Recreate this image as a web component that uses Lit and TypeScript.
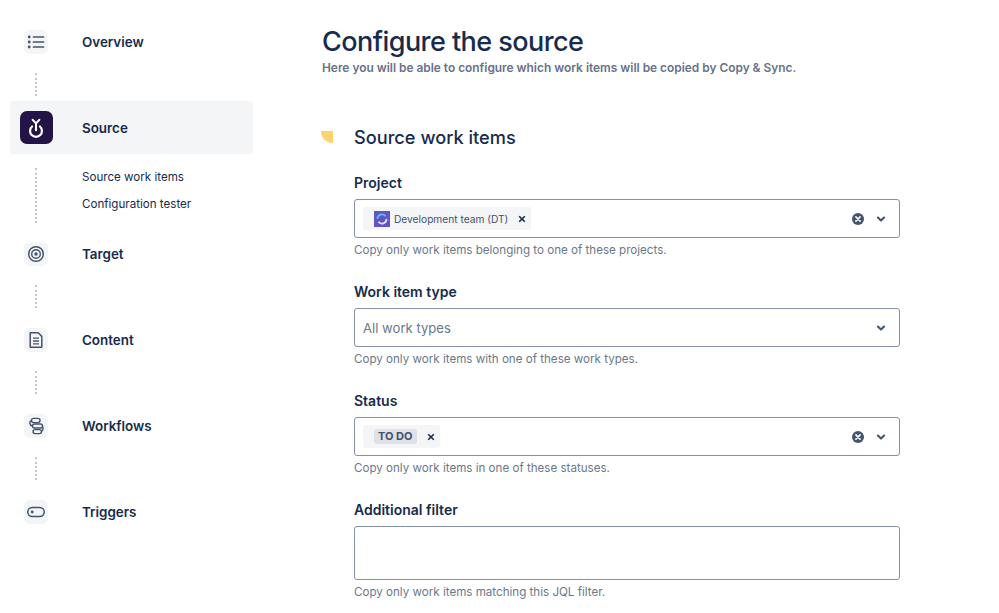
import { LitElement, html, css, svg } from "lit";
import { customElement } from "lit/decorators.js";

const S = "#44546F";
const icons: Record<string, unknown> = {
  list: svg`<circle cx="3.2" cy="5" r="1.4" fill="${S}"/><circle cx="3.2" cy="10" r="1.4" fill="${S}"/><circle cx="3.2" cy="15" r="1.4" fill="${S}"/><path d="M7.5 5H17.5M7.5 10H17.5M7.5 15H17.5" stroke="${S}" stroke-width="1.7" stroke-linecap="round"/>`,
  target: svg`<circle cx="10" cy="10" r="7.3" fill="none" stroke="${S}" stroke-width="1.5"/><circle cx="10" cy="10" r="4.3" fill="none" stroke="${S}" stroke-width="1.4"/><circle cx="10" cy="10" r="1.7" fill="${S}"/>`,
  doc: svg`<path d="M4.2 2.8H12.2L15.8 6.4V17.2H4.2Z" fill="none" stroke="${S}" stroke-width="1.5" stroke-linejoin="round"/><path d="M7 8.2H13M7 11H13M7 13.8H13" stroke="${S}" stroke-width="1.3"/>`,
  flow: svg`<rect x="5.5" y="2.4" width="8.5" height="4.2" rx="2.1" fill="none" stroke="${S}" stroke-width="1.4"/><rect x="6.5" y="8" width="10" height="4" rx="2" fill="none" stroke="${S}" stroke-width="1.4"/><rect x="7" y="13.6" width="8.5" height="4" rx="2" fill="none" stroke="${S}" stroke-width="1.4"/><path d="M5.5 4.5C3 5.6 3.2 9 6.5 10" fill="none" stroke="${S}" stroke-width="1.4"/><path d="M16.5 10.4C17.6 12 17 14.4 15.5 15.4" fill="none" stroke="${S}" stroke-width="1.4"/>`,
  toggle: svg`<rect x="1.8" y="5.6" width="16.4" height="8.8" rx="4.4" fill="none" stroke="${S}" stroke-width="1.5"/><circle cx="6.2" cy="10" r="1.4" fill="${S}"/>`,
};

const chevron = html`<svg class="chev" width="12" height="12" viewBox="0 0 12 12"><path d="M2.9 4.6 6 7.6 9.1 4.6" fill="none" stroke="#44546F" stroke-width="2.1" stroke-linecap="round" stroke-linejoin="round"/></svg>`;
const clear = html`<svg class="clear" width="14" height="14" viewBox="0 0 14 14"><circle cx="7" cy="7" r="6" fill="#44546F"/><path d="M4.9 4.9 9.1 9.1M9.1 4.9 4.9 9.1" stroke="#fff" stroke-width="1.6" stroke-linecap="round"/></svg>`;
const remove = html`<svg class="x" width="8" height="8" viewBox="0 0 8 8"><path d="M1.2 1.2 6.8 6.8M6.8 1.2 1.2 6.8" stroke="#172B4D" stroke-width="1.6"/></svg>`;

@customElement("app-root")
export class AppRoot extends LitElement {
  static styles = css`
    :host { display: flex; width: 999px; height: 613px; overflow: hidden; background: #fff;
      font-family: Inter, "Liberation Sans", sans-serif; color: #172B4D; }
    .side { width: 243px; margin-left: 10px; padding-top: 30px; box-sizing: border-box; flex: none; }
    .item { display: flex; align-items: center; height: 24px; padding-left: 14px; }
    .ico { width: 24px; height: 24px; border-radius: 6px; background: #F4F5F7; display: flex; align-items: center; justify-content: center; flex: none; }
    .label { margin-left: 34px; font-size: 13.4px; font-weight: 600; }
    .dots { width: 0; height: 23px; margin-left: 25px; border-left: 2px dotted #C1C7D0; }
    .gap { margin-top: 19px; margin-bottom: 20px; }
    .dots.after { margin-top: 19px; margin-bottom: 5px; }
    .active { height: 53px; background: #F4F5F7; border-radius: 3px; padding-left: 9.5px; }
    .active .ico { width: 33px; height: 33px; background: #231346; border-radius: 7px; }
    .active .label { margin-left: 29.5px; }
    .subwrap { display: flex; height: 55px; margin: 14px 0 19px; }
    .subwrap .dots { height: 55px; }
    .subs { margin-left: 45px; display: flex; flex-direction: column; gap: 11px; font-size: 11.6px; line-height: 16px; margin-top: 1px; }
    .main { margin-left: 69px; width: 578px; flex: none; }
    h1 { margin: 25px 0 0; font-size: 27px; line-height: 34px; font-weight: 500; letter-spacing: -0.55px; }
    .lead { margin: 1px 0 0; font-size: 11.9px; line-height: 16px; font-weight: 600; color: #67718A; }
    .sec { display: flex; align-items: center; margin-top: 46px; height: 30px; }
    .corner { width: 12px; height: 12px; margin-left: -1px; background: #FFD36B; border-bottom-left-radius: 12px; flex: none; }
    h2 { margin: 0 0 0 21px; font-size: 18.2px; line-height: 24px; font-weight: 500; }
    .fields { margin-left: 32px; }
    .field { height: 109px; }
    .lab { font-size: 14px; font-weight: 600; line-height: 18px; padding-top: 13px; margin-bottom: 7px; }
    .first .lab { padding-top: 22px; }
    .first { height: 118px; }
    .box { box-sizing: border-box; width: 546px; height: 39px; border: 1px solid #8590A2; border-radius: 3px; display: flex; align-items: center; padding: 0 12px 0 8px; }
    .tall { height: 54px; }
    .tag { display: flex; align-items: center; height: 23px; background: #F4F5F7; border-radius: 2px; font-size: 10.2px; color: #42526E; padding: 0 5px 0 11px; }
    .tag .x { margin-left: 10px; }
    .avatar { width: 16px; height: 16px; margin-right: 4px; flex: none; }
    .todo { background: #DFE1E6; border-radius: 3px; font-size: 11px; font-weight: 700; padding: 0 4px; height: 15px; line-height: 15px; }
    .grow { flex: 1; }
    .clear { margin-right: 10px; }
    .ph { font-size: 13.1px; color: #6B778C; }
    .help { font-size: 11.6px; line-height: 16px; color: #6B778C; margin-top: 4px; }
  `;

  private nav(name: string, icon: string) {
    return html`<div class="item"><span class="ico"><svg width="20" height="20" viewBox="0 0 20 20">${icons[icon]}</svg></span><span class="label">${name}</span></div>`;
  }

  render() {
    return html`
      <nav class="side">
        ${this.nav("Overview", "list")}
        <div class="dots after"></div>
        <div class="item active"><span class="ico"><svg width="22" height="22" viewBox="0 0 20 20"><path d="M6.4 8.6A5.4 5.4 0 1 0 13.6 8.6" fill="none" stroke="#fff" stroke-width="2" stroke-linecap="round"/><path d="M7 2.6 10 5.8 13 2.6M10 5.8V12" fill="none" stroke="#fff" stroke-width="1.9" stroke-linecap="round" stroke-linejoin="round"/></svg></span><span class="label">Source</span></div>
        <div class="subwrap"><div class="dots"></div><div class="subs"><span>Source work items</span><span>Configuration tester</span></div></div>
        ${this.nav("Target", "target")}
        <div class="dots gap"></div>
        ${this.nav("Content", "doc")}
        <div class="dots gap"></div>
        ${this.nav("Workflows", "flow")}
        <div class="dots gap"></div>
        ${this.nav("Triggers", "toggle")}
      </nav>
      <main class="main">
        <h1>Configure the source</h1>
        <p class="lead">Here you will be able to configure which work items will be copied by Copy &amp; Sync.</p>
        <div class="sec"><span class="corner"></span><h2>Source work items</h2></div>
        <div class="fields">
          <div class="field first">
            <div class="lab">Project</div>
            <div class="box">
              <span class="tag">
                <svg class="avatar" viewBox="0 0 16 16"><rect width="16" height="16" fill="#6554C0"/><path d="M3.4 8A4.6 4.6 0 0 1 11.6 5.2" fill="none" stroke="#4FC3F7" stroke-width="1.8"/><path d="M12.6 8A4.6 4.6 0 0 1 4.4 10.8" fill="none" stroke="#DDE6FF" stroke-width="1.8"/></svg>
                Development team (DT)${remove}
              </span>
              <span class="grow"></span>${clear}${chevron}
            </div>
            <div class="help">Copy only work items belonging to one of these projects.</div>
          </div>
          <div class="field">
            <div class="lab">Work item type</div>
            <div class="box"><span class="ph">All work types</span><span class="grow"></span>${chevron}</div>
            <div class="help">Copy only work items with one of these work types.</div>
          </div>
          <div class="field">
            <div class="lab">Status</div>
            <div class="box">
              <span class="tag"><span class="todo">TO DO</span>${remove}</span>
              <span class="grow"></span>${clear}${chevron}
            </div>
            <div class="help">Copy only work items in one of these statuses.</div>
          </div>
          <div class="field">
            <div class="lab">Additional filter</div>
            <div class="box tall"></div>
            <div class="help">Copy only work items matching this JQL filter.</div>
          </div>
        </div>
      </main>
    `;
  }
}
